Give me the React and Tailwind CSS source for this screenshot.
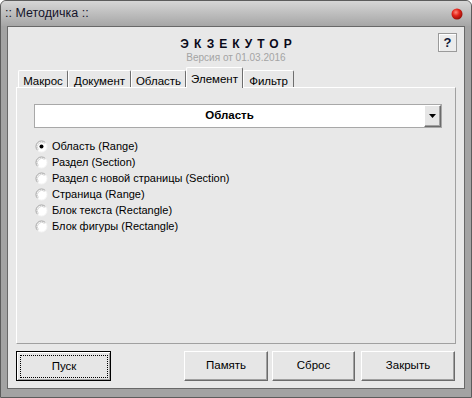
import React from "react";

function Radio({ checked }) {
  return (
    <svg width="13" height="13" viewBox="0 0 13 13" className="shrink-0">
      <circle cx="6.5" cy="6.5" r="5.5" fill="#ffffff" />
      <path d="M2.6 10.4 A5.5 5.5 0 0 1 10.4 2.6" fill="none" stroke="#a0a0a0" strokeWidth="1" />
      <path d="M3.4 9.6 A4.4 4.4 0 0 1 9.6 3.4" fill="none" stroke="#d4d4d4" strokeWidth="1" />
      <path d="M10.4 2.6 A5.5 5.5 0 0 1 2.6 10.4" fill="none" stroke="#f4f4f4" strokeWidth="1" />
      {checked && <circle cx="6.5" cy="6.5" r="2" fill="#000" />}
    </svg>
  );
}

function CloseDot() {
  return (
    <svg width="12" height="12" viewBox="0 0 12 12">
      <defs>
        <radialGradient id="rg" cx="0.4" cy="0.35" r="0.7">
          <stop offset="0" stopColor="#ff8a7a" />
          <stop offset="0.45" stopColor="#e4241a" />
          <stop offset="1" stopColor="#8c0c06" />
        </radialGradient>
      </defs>
      <circle cx="6" cy="6" r="5.5" fill="url(#rg)" />
    </svg>
  );
}

const tabs = [
  { label: "Макрос", w: "w-[50px]" },
  { label: "Документ", w: "w-[63px]" },
  { label: "Область", w: "w-[55px]" },
  { label: "Элемент", w: "w-[57px]", active: true },
  { label: "Фильтр", w: "w-[51px]" },
];

const options = [
  "Область (Range)",
  "Раздел (Section)",
  "Раздел с новой страницы (Section)",
  "Страница (Range)",
  "Блок текста (Rectangle)",
  "Блок фигуры (Rectangle)",
];

function Btn({ children, w }) {
  return (
    <div
      className={`${w} h-[30px] flex items-center justify-center border border-t-white border-l-white border-r-[#6b6b6b] border-b-[#6b6b6b] shadow-[inset_-1px_-1px_0_#a0a0a0] bg-[#e6e6e6] text-[11.5px] text-black`}
    >
      {children}
    </div>
  );
}

export default function App() {
  return (
    <div className="w-[472px] h-[398px] font-['Liberation_Sans',Arial,sans-serif] bg-white">
      <div className="w-[472px] h-[398px] flex flex-col border border-[#5c5c5c] rounded-t-[6px] bg-[#a3a3a3] overflow-hidden">
        {/* title bar */}
        <div className="h-[25px] shrink-0 flex items-center justify-between pl-[4px] pr-[8px] bg-gradient-to-b from-[#d6d6d6] to-[#a6a6a6]">
          <span className="text-[12.5px] text-[#14142a] leading-none">:: Методичка ::</span>
          <CloseDot />
        </div>
        {/* client */}
        <div className="flex-1 flex px-[6px] pb-[8px]">
          <div className="flex-1 flex flex-col border border-[#686868] bg-[#e8e8e8]">
            {/* header */}
            <div className="h-[40px] shrink-0 grid grid-cols-[1fr_auto_1fr]">
              <div />
              <div className="flex flex-col items-center pt-[10px]">
                <span className="text-[12px] font-bold tracking-[5px] pl-[5px] leading-[14px] text-[#0a0a1a]">ЭКЗЕКУТОР</span>
                <span className="text-[10px] text-[#a4a4a4] leading-[12px] mt-[1px]">Версия от 01.03.2016</span>
              </div>
              <div className="flex justify-end pt-[6px] pr-[7px]">
                <div className="w-[19px] h-[19px] flex items-center justify-center border border-[#9a9a9a] bg-[#ececec] shadow-[inset_1px_1px_0_#ffffff] text-[13px] font-bold text-[#101838]">
                  ?
                </div>
              </div>
            </div>
            {/* tabs */}
            <div className="h-[20px] shrink-0 flex items-end pl-[10px] relative z-10">
              {tabs.map((t) =>
                t.active ? (
                  <div
                    key={t.label}
                    className={`${t.w} h-[21px] -mb-[1px] flex justify-center pt-[3px] text-[11.5px] text-black bg-[#e8e8e8] border-t border-l border-white border-r border-r-[#6e6e6e] rounded-t-[2px]`}
                  >
                    {t.label}
                  </div>
                ) : (
                  <div
                    key={t.label}
                    className={`${t.w} h-[17px] flex justify-center pt-[2px] text-[11.5px] text-black border-t border-l border-white border-r border-r-[#6e6e6e] rounded-t-[2px]`}
                  >
                    {t.label}
                  </div>
                )
              )}
            </div>
            {/* panel */}
            <div className="h-[257px] shrink-0 mx-[8px] border border-t-white border-l-white border-r-[#a0a0a0] border-b-[#a0a0a0] pl-[17px] pr-[13px] pt-[16px]">
              <div className="h-[24px] flex border border-[#a8a8a8] bg-white">
                <div className="flex-1 flex items-center justify-center text-[11.5px] font-bold text-black">Область</div>
                <div className="w-[17px] flex items-center justify-center border border-t-white border-l-white border-r-[#6b6b6b] border-b-[#6b6b6b] bg-[#e6e6e6] shadow-[inset_-1px_-1px_0_#a0a0a0]">
                  <svg width="7" height="4" viewBox="0 0 7 4">
                    <path d="M0 0 H7 L3.5 4 Z" fill="#000" />
                  </svg>
                </div>
              </div>
              <div className="flex flex-col pt-[10px]">
                {options.map((o, i) => (
                  <div key={o} className="h-[16px] flex items-center gap-[4px] pl-[1px]">
                    <Radio checked={i === 0} />
                    <span className="text-[11px] text-black leading-none">{o}</span>
                  </div>
                ))}
              </div>
            </div>
            {/* buttons */}
            <div className="flex items-start pt-[7px] pl-[8px] pr-[8px]">
              <div className="w-[95px] h-[30px] border border-black">
                <div className="w-full h-full flex items-center justify-center border-t border-l border-white shadow-[inset_-1px_-1px_0_#a0a0a0] bg-[#e6e6e6] p-[2px]">
                  <div className="w-full h-full flex items-center justify-center border border-dotted border-black text-[11.5px] text-black">
                    Пуск
                  </div>
                </div>
              </div>
              <div className="w-[73px]" />
              <Btn w="w-[84px]">Память</Btn>
              <div className="w-[4px]" />
              <Btn w="w-[83px]">Сброс</Btn>
              <div className="w-[6px]" />
              <Btn w="w-[94px]">Закрыть</Btn>
            </div>
          </div>
        </div>
      </div>
    </div>
  );
}
